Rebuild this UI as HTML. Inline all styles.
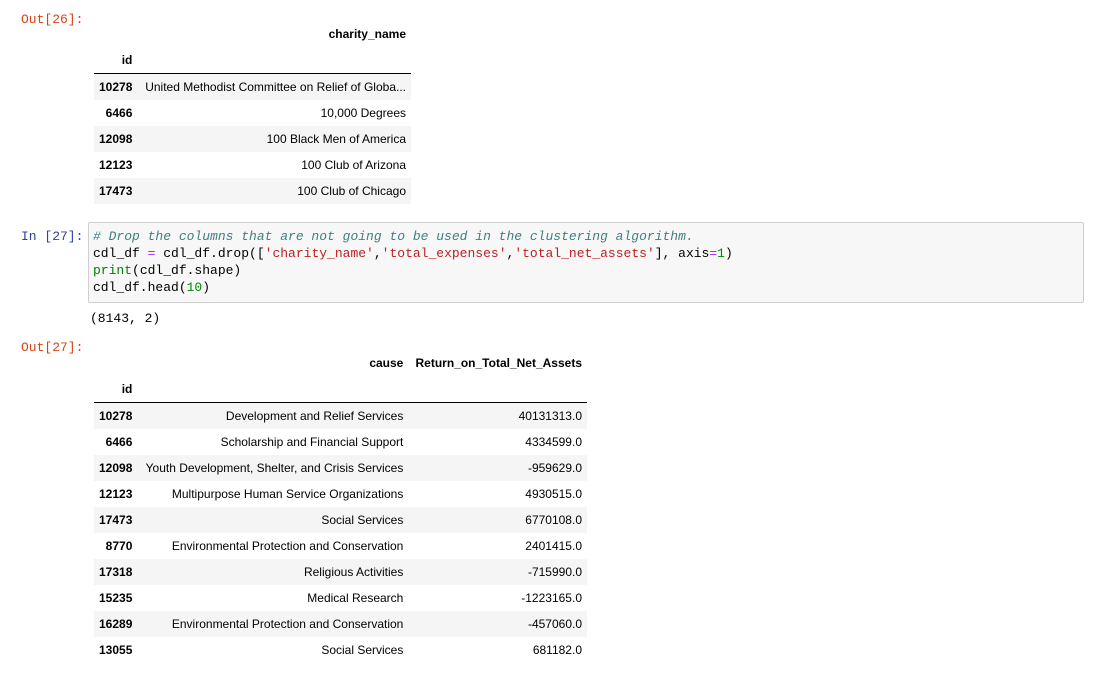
<!DOCTYPE html>
<html><head><style>
body{margin:0;width:1094px;height:675px;background:#fff;position:relative;overflow:hidden;font-family:"Liberation Sans",Arial,sans-serif;font-size:12px;color:#000}
.p{position:absolute;font-family:"Liberation Mono",monospace;font-size:13px;line-height:17px;white-space:pre}
.out{color:#D84315}
.in{color:#303F9F}
table{position:absolute;border-collapse:collapse;border-spacing:0}
td,th{height:26px;padding:0 5px;text-align:right;white-space:nowrap;line-height:26px}
th{font-weight:bold}
tbody tr:nth-child(odd){background:#f5f5f5}
thead tr.l th{border-bottom:1px solid #000}
.code{position:absolute;left:88px;top:222px;width:994px;height:79px;background:#f7f7f7;border:1px solid #cfcfcf;border-radius:2px}
.c{color:#408080;font-style:italic}.s{color:#BA2121}.k{color:#008000}.o{color:#AA22FF}.n{color:#080}
</style></head><body>
<div class="p out" style="left:21px;top:11px">Out[26]:</div>
<table style="left:94px;top:21px;width:317px">
<thead><tr><th style="width:29px"></th><th>charity_name</th></tr>
<tr class="l"><th>id</th><th></th></tr></thead>
<tbody>
<tr><th>10278</th><td>United Methodist Committee on Relief of Globa...</td></tr>
<tr><th>6466</th><td>10,000 Degrees</td></tr>
<tr><th>12098</th><td>100 Black Men of America</td></tr>
<tr><th>12123</th><td>100 Club of Arizona</td></tr>
<tr><th>17473</th><td>100 Club of Chicago</td></tr>
</tbody></table>

<div class="p in" style="left:21px;top:228px">In [27]:</div>
<div class="code"></div>
<div class="p" style="left:93px;top:228px"><span class="c"># Drop the columns that are not going to be used in the clustering algorithm.</span>
cdl_df <span class="o">=</span> cdl_df.drop([<span class="s">'charity_name'</span>,<span class="s">'total_expenses'</span>,<span class="s">'total_net_assets'</span>], axis<span class="o">=</span><span class="n">1</span>)
<span class="k">print</span>(cdl_df.shape)
cdl_df.head(<span class="n">10</span>)</div>
<div class="p" style="left:90px;top:310px">(8143, 2)</div>
<div class="p out" style="left:21px;top:339px">Out[27]:</div>
<table style="left:94px;top:350px;width:493px">
<thead><tr><th style="width:29px"></th><th>cause</th><th>Return_on_Total_Net_Assets</th></tr>
<tr class="l"><th>id</th><th></th><th></th></tr></thead>
<tbody>
<tr><th>10278</th><td>Development and Relief Services</td><td>40131313.0</td></tr>
<tr><th>6466</th><td>Scholarship and Financial Support</td><td>4334599.0</td></tr>
<tr><th>12098</th><td>Youth Development, Shelter, and Crisis Services</td><td>-959629.0</td></tr>
<tr><th>12123</th><td>Multipurpose Human Service Organizations</td><td>4930515.0</td></tr>
<tr><th>17473</th><td>Social Services</td><td>6770108.0</td></tr>
<tr><th>8770</th><td>Environmental Protection and Conservation</td><td>2401415.0</td></tr>
<tr><th>17318</th><td>Religious Activities</td><td>-715990.0</td></tr>
<tr><th>15235</th><td>Medical Research</td><td>-1223165.0</td></tr>
<tr><th>16289</th><td>Environmental Protection and Conservation</td><td>-457060.0</td></tr>
<tr><th>13055</th><td>Social Services</td><td>681182.0</td></tr>
</tbody></table>
</body></html>
